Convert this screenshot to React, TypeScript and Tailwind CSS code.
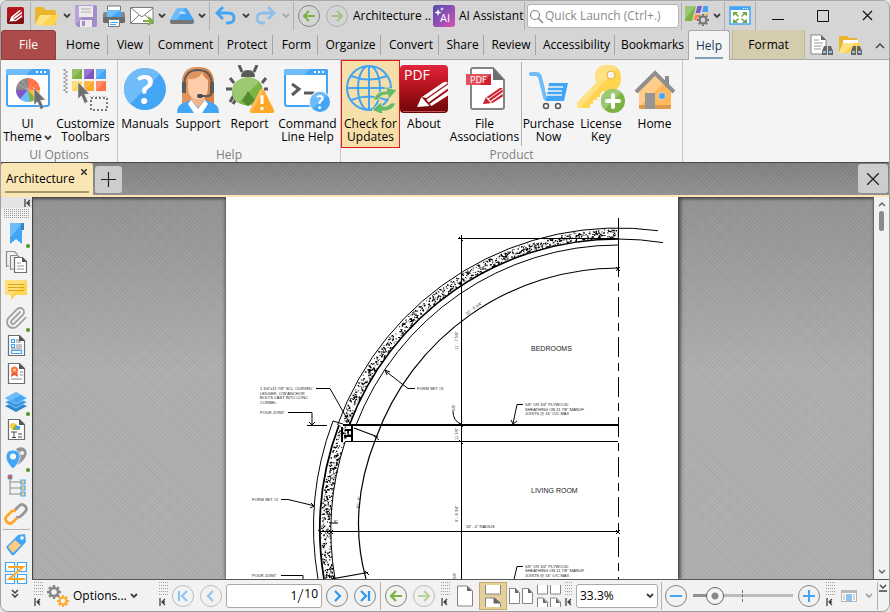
import type { ReactNode } from "react"
import clsx from "clsx"
import { Paperclip } from "lucide-react"

/* ---------- shared bits ---------- */

interface SvgProps {
  w: number
  h: number
  children: ReactNode
}

function Svg({ w, h, children }: SvgProps) {
  return (
    <svg width={w} height={h} viewBox={`0 0 ${w} ${h}`} fill="none" className="block flex-none" aria-hidden="true">
      {children}
    </svg>
  )
}

function Chevron({ faded = false }: { faded?: boolean }) {
  return (
    <Svg w={8} h={6}>
      <path d="M1 1l3 3 3-3" stroke={faded ? "#a8a8a8" : "#404040"} strokeWidth="1.800" />
    </Svg>
  )
}

function Divider({ className }: { className?: string }) {
  return <span className={clsx("w-px flex-none bg-[#b0b0b0]", className)} />
}

function PinIcon() {
  return (
    <Svg w={7} h={8}>
      <path d="M1 0v8M6 1L3 4l3 3M3 4h3" stroke="#404040" strokeWidth="1.300" />
    </Svg>
  )
}

function Grip({ dots = 9 }: { dots?: number }) {
  return (
    <span className="flex w-[10px] flex-none flex-col items-start gap-px pb-1">
      <Svg w={dots} h={15}>
        {[0, 3, 6, 9, 12].map((y) => (
          <path key={y} d={`M0 ${y + 0.5}h${dots}`} stroke="#a0a0a0" strokeDasharray="1 1" />
        ))}
      </Svg>
      <PinIcon />
    </span>
  )
}

interface RoundButtonProps {
  label: string
  children: ReactNode
  faded?: boolean
}

function RoundButton({ label, children, faded }: RoundButtonProps) {
  return (
    <button
      aria-label={label}
      className={clsx(
        "flex size-[22px] flex-none items-center justify-center rounded-full border border-[#858585]",
        faded && "opacity-50",
      )}
    >
      {children}
    </button>
  )
}

function Arrow({ back = false }: { back?: boolean }) {
  return (
    <Svg w={14} h={12}>
      <path d={back ? "M13 6H2M7 1L2 6l5 5" : "M1 6h11M7 1l5 5-5 5"} stroke="#7cb342" strokeWidth="2.200" />
    </Svg>
  )
}

function Cursor({ x, y }: { x: number; y: number }) {
  return (
    <path
      transform={`translate(${x} ${y})`}
      d="M0 0l11.500 12-5 .3 3.500 7.500-3.400 1.700-3.200-7.800L0 17z"
      fill="#6e6e6e"
      stroke="#f4f4f4"
      strokeWidth=".5"
    />
  )
}

function PencilMark() {
  return (
    <>
      <path d="M17 42l4.500-10 8 9z" />
      <path d="M22 32L43 17.500q3-1.500 5 .5L26.500 33z" />
      <path d="M26.500 34.500L48 19.500v4L28.500 37.500z" />
      <path d="M29.500 39L48 26v4.500L31.500 41z" />
    </>
  )
}

function Gear({ x, y, r, color }: { x: number; y: number; r: number; color: string }) {
  return (
    <g transform={`translate(${x} ${y})`} stroke={color}>
      <circle r={r * 0.58} strokeWidth={r * 0.36} />
      {[0, 45, 90, 135, 180, 225, 270, 315].map((a) => (
        <path key={a} d={`M0 ${-r * 0.7}V${-r}`} strokeWidth={r * 0.35} transform={`rotate(${a})`} />
      ))}
    </g>
  )
}

/* ---------- quick access icons ---------- */

const LogoIcon = () => (
  <Svg w={17} h={17}>
    <rect width="17" height="17" rx="2" fill="#b01620" />
    <path d="M0 11h17v4a2 2 0 01-2 2H2a2 2 0 01-2-2z" fill="#7e1014" />
    <path d="M2.500 14.500L4.500 9.500 12.500 3l1.500.5-8 7z" fill="#fff" />
    <path d="M6 11l9-6.500V6.500L7 12.500zM7.500 13.500l7.500-5.500v2L8.500 14.500z" fill="#fff" />
    <path d="M2.500 14.500l2-5 4 4.500z" fill="#fff" />
  </Svg>
)

const FolderIcon = () => (
  <Svg w={24} h={22}>
    <path d="M0 20V4q0-2 2-2h6l3 3h8q2 0 2 2v13z" fill="#eab42c" />
    <path d="M0 20l5-10h19l-4 9q-.4 1.500-2 1.500z" fill="#ffd54f" />
    <path d="M0 20l5-10h12L6 20.500z" fill="#ffe082" />
  </Svg>
)

const SaveIcon = () => (
  <Svg w={22} h={22}>
    <path d="M2 0h18a2 2 0 012 2v18a2 2 0 01-2 2H3l-3-3V2a2 2 0 012-2z" fill="#a48cc8" />
    <path d="M2 0h18L0 20V2a2 2 0 012-2z" fill="#b8a4d8" />
    <path d="M4 1h14v11H4zM5 15h12v7H5z" fill="#ebebeb" />
    <path d="M6 4h10M6 7h10" stroke="#c4c4c4" strokeWidth="1.500" />
    <path d="M7 16h3v5H7z" fill="#a48cc8" />
  </Svg>
)

const PrinterIcon = () => (
  <Svg w={22} h={22}>
    <path d="M4.500 1h13v6h-13z" fill="#fff" stroke="#777" />
    <rect y="7" width="22" height="11" rx="2" fill="#858585" />
    <path d="M0 12h22v4a2 2 0 01-2 2H2a2 2 0 01-2-2z" fill="#6c6c6c" />
    <path d="M4 5h14v7H4z" fill="#42a5f5" />
    <path d="M4 5h14L8 12H4z" fill="#70bcf8" />
    <path d="M5.500 14.500h11v7h-11z" fill="#fff" stroke="#777" />
    <path d="M7 17.500h8M7 19.500h6" stroke="#42a5f5" />
  </Svg>
)

const MailIcon = () => (
  <Svg w={24} h={20}>
    <path d="M.5 1.500h22.500v16H.500z" fill="#fff" stroke="#7c7c7c" />
    <path d="M1 2l11 9L23 2M1 17l8-8M23 17l-8-8" stroke="#7c7c7c" />
    <path d="M13 15h9M18 11l4.500 4-4.500 4" stroke="#7cb342" strokeWidth="2.200" />
  </Svg>
)

const ScannerIcon = () => (
  <Svg w={24} h={16}>
    <path d="M0 12L6 2q1-2 3-2h6q2 0 3 2l6 10z" fill="#42a5f5" />
    <path d="M0 12L6 2q1-2 3-2h6l-8 12z" fill="#70bcf8" />
    <path d="M9 6l1.500-2.500h4L16 6z" fill="#b9ddfb" />
    <path d="M0 12h24v2q0 2-2 2H2q-2 0-2-2z" fill="#777" />
  </Svg>
)

const UndoIcon = () => (
  <Svg w={21} h={19}>
    <path d="M8 1L2 7l6 6M3 7h10q6 0 6 5t-6 5h-2" stroke="#42a5f5" strokeWidth="2.800" />
  </Svg>
)

const RedoIcon = () => (
  <Svg w={21} h={19}>
    <path d="M13 1l6 6-6 6M18 7H8q-6 0-6 5t6 5h2" stroke="#8fbfe8" strokeWidth="2.800" />
  </Svg>
)

const AiIcon = () => (
  <Svg w={22} h={22}>
    <defs>
      <linearGradient id="ai" x2="1" y2="1">
        <stop stopColor="#4a4fb0" />
        <stop offset="1" stopColor="#d850b4" />
      </linearGradient>
    </defs>
    <rect width="22" height="22" rx="3" fill="url(#ai)" />
    <path d="M5 4l1 2.500L8.500 7.500 6 8.500 5 11 4 8.500 1.500 7.500 4 6.500zM9 2l.6 1.400L11 4l-1.400.6L9 6l-.6-1.400L7 4l1.400-.6z" fill="#fff" />
    <text x="7" y="17" fontSize="11" fill="#fff" fontFamily="Open Sans">AI</text>
  </Svg>
)

const LayoutIcon = () => (
  <Svg w={25} h={22}>
    <path d="M0 1h11L7 16H0z" fill="#7cb342" />
    <path d="M0 1h11L0 14z" fill="#9bc870" />
    <path d="M12.500 1H17l-2 7h-4.500z" fill="#7e57c2" />
    <path d="M18.500 1H23v6h-6z" fill="#42a5f5" />
    <path d="M10 9.500h7l-2 5.500H8.500z" fill="#ff8a50" />
    <path d="M18 8.500h5V15h-6z" fill="#ffb648" />
    <circle cx="18" cy="15" r="6" fill="#d5d5d5" />
    <Gear x={18} y={15} r={6} color="#757575" />
  </Svg>
)

const FullScreenIcon = () => (
  <Svg w={22} h={19}>
    <path d="M1 1h20v17H1z" fill="#fff" stroke="#42a5f5" strokeWidth="1.500" />
    <path d="M1 1h20v3H1z" fill="#42a5f5" />
    <path d="M14 2.500h6" stroke="#fff" strokeDasharray="1 1" />
    <path d="M4 6h5L7.500 7.500 10 10l-1 1-2.500-2.500L4 10zM18 6h-5l1.500 1.500L12 10l1 1 2.500-2.500L18 10zM4 17h5l-1.500-1.500L10 13l-1-1-2.500 2.500L4 13zM18 17h-5l1.500-1.500L12 13l1-1 2.500 2.500L18 13z" fill="#6fa83c" />
  </Svg>
)

const Binoculars = () => (
  <>
    <path d="M12 21v-4l2-5h3v9zM23 21v-4l-2-5h-3v9z" fill="#666" />
    <path d="M13 18h3M19 18h3" stroke="#8cc4f2" strokeWidth="2" />
  </>
)

const FindDocIcon = () => (
  <Svg w={24} h={23}>
    <path d="M1 1h10l5 5v14H1z" fill="#fff" stroke="#858585" />
    <path d="M11 1v5h5z" fill="#666" />
    <path d="M4 6h5M4 9h9M4 12h8M4 15h7" stroke="#999" />
    <Binoculars />
  </Svg>
)

const FindFolderIcon = () => (
  <Svg w={24} h={23}>
    <path d="M0 19V3q0-1 1-1h7l2 2h8v5H4z" fill="#eab42c" />
    <path d="M4 6h15v5H4z" fill="#fff" />
    <path d="M0 19L4 9h18l-4 10z" fill="#ffd54f" />
    <path d="M0 19L4 9h12L5 19z" fill="#ffe082" />
    <Binoculars />
  </Svg>
)

/* ---------- ribbon icons ---------- */

const ThemeIcon = () => (
  <Svg w={46} h={46}>
    <rect x="2" y="4" width="42" height="36" rx="2" fill="#fff" stroke="#42a5f5" strokeWidth="2" />
    <path d="M1 5q0-2 2-2h40q2 0 2 2v4H1z" fill="#70bcf8" />
    <path d="M21 9l6-6h16q2 0 2 2v4z" fill="#42a5f5" />
    <path d="M31 6h11" stroke="#fff" strokeWidth="2" strokeDasharray="2 2" />
    <g transform="translate(23 24)">
      <path d="M0 0V-12A12 12 0 0112 0z" fill="#ff7043" />
      <path d="M0 0H12A12 12 0 010 12z" fill="#ffb648" />
      <path d="M0 0L8 9A12 12 0 01-3 11.600z" fill="#7cb342" />
      <path d="M0 0L2 11.800A12 12 0 01-9 8z" fill="#70bcf8" />
      <path d="M0 0L-8 9A12 12 0 01-12 0z" fill="#7e57c2" />
      <path d="M0 0H-12A12 12 0 010-12z" fill="#8a8a8a" />
      <path d="M-10-6L0 0-6-10M0 0l6-10M0 0l10-5" stroke="#fff" strokeOpacity=".25" />
    </g>
    <Cursor x={29} y={22} />
  </Svg>
)

const ToolbarsIcon = () => (
  <Svg w={46} h={48}>
    <path d="M1.500 4v22M3.500 6v22" stroke="#999" strokeWidth="2" strokeDasharray="2 2" />
    {[
      ["#7cb342", 9, 4],
      ["#7e57c2", 21, 4],
      ["#42a5f5", 33, 4],
      ["#ffd54f", 9, 16],
      ["#ffa726", 21, 16],
      ["#ff7043", 33, 16],
    ].map(([fill, x, y]) => (
      <g key={String(fill)}>
        <rect x={x} y={y} width="10" height="10" fill={String(fill)} />
        <path d={`M${x} ${y}h10l-10 10z`} fill="#fff" fillOpacity=".2" />
      </g>
    ))}
    <Cursor x={15} y={17} />
    <path d="M28 33h16v12H28z" stroke="#777" strokeWidth="2" strokeDasharray="2 2" />
    <path d="M27 31.500h18" stroke="#aaa" strokeDasharray="1 2" />
  </Svg>
)

const HelpDisc = ({ x, y, r, size }: { x: number; y: number; r: number; size: number }) => (
  <g transform={`translate(${x} ${y})`}>
    <circle r={r} fill="#42a5f5" />
    <path d={`M${-r * 0.71} ${r * 0.71}A${r} ${r} 0 01${r * 0.71} ${-r * 0.71}z`} fill="#70bcf8" />
    <text y={size * 0.37} textAnchor="middle" fontSize={size} fontWeight="700" fill="#fff" fontFamily="Lato">?</text>
  </g>
)

const ManualsIcon = () => (
  <Svg w={46} h={46}>
    <HelpDisc x={23} y={23} r={21} size={40} />
  </Svg>
)

const SupportIcon = () => (
  <Svg w={42} h={48}>
    <path d="M5 44V18Q5 2 21 2t16 16v26H5z" fill="#d9824a" />
    <path d="M5 44V18Q5 2 21 2l8 3L9 42z" fill="#e0955f" />
    <path d="M14 30h14v10l-7 5-7-5z" fill="#b86430" />
    <path d="M15 29h12l2 10-8 7-8-7z" fill="#f0b78c" />
    <path d="M11 14q10 1 14-6 3 6 6 7v7q0 12-10 12T11 22z" fill="#ffccaa" />
    <path d="M0 48q0-9 9-11l5-2 7 8 7-8 5 2q9 2 9 11z" fill="#42a5f5" />
    <path d="M14 35l-3 4 6 9h8l6-9-3-4-7 9z" fill="#fff" />
    <path d="M7 19Q8 5 21 5t14 14" stroke="#5a5a5a" strokeWidth="2" />
    <path d="M5 17h4v11H5zM33 17h4v11h-4z" fill="#5a5a5a" />
    <path d="M35 27q-1 5-7 4h-5" stroke="#5a5a5a" strokeWidth="2" />
    <rect x="20" y="29" width="6" height="4" rx="2" fill="#4a4a4a" />
  </Svg>
)

const ReportIcon = () => (
  <Svg w={48} h={48}>
    <path d="M15 12q0-7 7-7t7 7z" fill="#5a5a5a" />
    <path d="M16 7l-3-7M28 7l3-7M8 18l-4-5M36 18l4-5M6 24H0M38 24h4M8 30l-4 7M10 34l-3 5" stroke="#5a5a5a" strokeWidth="3" />
    <path d="M22 12q15 2 15 15 0 11-15 14Q6 38 6 26q1-12 16-14z" fill="#7cb342" />
    <path d="M22 12q6 0 11 5L12 38Q6 34 6 26q1-12 16-14z" fill="#9bc870" />
    <path d="M22 26l7 9-7 6-6-5z" fill="#558b2f" />
    <path d="M34 25q2-3 4 0l10 20q1 3-2 3H26q-3 0-2-3z" fill="#ffa726" />
    <path d="M34 25q2-3 4 0L25 48q-2-1-1-3z" fill="#ffbc5c" />
    <path d="M36 30v9M36 42v3" stroke="#fff" strokeWidth="3" />
  </Svg>
)

const CommandIcon = () => (
  <Svg w={52} h={48}>
    <rect x="3" y="5" width="42" height="36" rx="2" fill="#fff" stroke="#42a5f5" strokeWidth="2" />
    <path d="M2 6q0-2 2-2h40q2 0 2 2v4H2z" fill="#70bcf8" />
    <path d="M22 10l6-6h16q2 0 2 2v4z" fill="#42a5f5" />
    <path d="M32 7h11" stroke="#fff" strokeWidth="2" strokeDasharray="2 2" />
    <path d="M10 19l7 5-7 6" stroke="#5a5a5a" strokeWidth="3" />
    <path d="M22 28h10" stroke="#5a5a5a" strokeWidth="3" />
    <circle cx="38" cy="37" r="11" fill="#f4f4f4" />
    <HelpDisc x={38} y={37} r={10} size={18} />
  </Svg>
)

const GlobeIcon = () => (
  <Svg w={50} h={48}>
    <g stroke="#42a5f5" strokeWidth="2">
      <circle cx="23" cy="23" r="22" />
      <ellipse cx="23" cy="23" rx="11" ry="22" />
      <path d="M23 1v44M1 23h44M5 11q18 7 36 0M5 35q18-7 36 0" />
    </g>
    <path d="M27 35q4-10 14-9l-2-4 12 3-8 9-1-4q-7-1-10 5z" fill="#66bb6a" stroke="#f7dfa9" strokeWidth=".8" />
    <path d="M50 38q-4 9-14 8l2 4-12-5 9-8 1 4q6 1 9-3z" fill="#66bb6a" stroke="#f7dfa9" strokeWidth=".8" />
  </Svg>
)

const AboutIcon = () => (
  <Svg w={48} h={48}>
    <defs>
      <linearGradient id="about" x2="0" y2="1">
        <stop stopColor="#e3253b" />
        <stop offset=".45" stopColor="#b5131d" />
        <stop offset="1" stopColor="#6b0608" />
      </linearGradient>
    </defs>
    <rect width="48" height="48" rx="4" fill="url(#about)" />
    <path d="M3 46.500h42" stroke="#c9505a" />
    <text x="4" y="15" fontSize="14" fill="#fff" fontFamily="Open Sans">PDF</text>
    <g fill="#fff">
      <PencilMark />
    </g>
  </Svg>
)

const FileAssocIcon = () => (
  <Svg w={40} h={46}>
    <path d="M6 4q0-2 2-2h20l11 12v27q0 2-2 2H8q-2 0-2-2z" fill="#fff" stroke="#858585" strokeWidth="2" />
    <path d="M28 2v12h11z" fill="#6e6e6e" />
    <path d="M1 8h25v11H1z" fill="#d3202e" />
    <path d="M1 8h25L15 19H1z" fill="#e0525c" />
    <text x="5" y="17" fontSize="9" fill="#fff" fontFamily="Open Sans">PDF</text>
    <g fill="#cf1f2c" transform="translate(7 11) scale(.64)">
      <PencilMark />
    </g>
  </Svg>
)

const CartIcon = () => (
  <Svg w={42} h={46}>
    <path d="M3 8h5q3 0 4 3l5 20q0 2 3 2h14" stroke="#70bcf8" strokeWidth="4" strokeLinecap="round" />
    <path d="M21 17h19l-4 18H18z" fill="#42a5f5" />
    <path d="M17 21h18M17 25h17M18 29h16" stroke="#f4f4f4" strokeWidth="1.500" />
    <circle cx="18" cy="40" r="2.500" stroke="#5a5a5a" strokeWidth="1.500" />
    <circle cx="30" cy="40" r="2.500" stroke="#5a5a5a" strokeWidth="1.500" />
  </Svg>
)

const KeyIcon = () => (
  <Svg w={48} h={48}>
    <path d="M18 13Q18 0 31 0t13 13-13 14q-3 0-5-1l-3 3v3h-3v3h-4v4h-3v4H0v-5l20-21q-2-2-2-4z" fill="#ffd54f" />
    <path d="M18 13Q18 0 31 0q6 0 9 3L3 43H0v-5l20-21q-2-2-2-4z" fill="#ffe082" />
    <circle cx="34" cy="10" r="4" fill="#f4f4f4" stroke="#e5b53a" />
    <circle cx="36" cy="36" r="12" fill="#7cb342" />
    <path d="M27.500 44.500a12 12 0 0117-17z" fill="#9bc870" />
    <path d="M36 30v12M30 36h12" stroke="#fff" strokeWidth="4" strokeLinecap="round" />
  </Svg>
)

const HouseIcon = () => (
  <Svg w={42} h={46}>
    <path d="M31 10h4v12h-4z" fill="#8a8a8a" />
    <path d="M5 26L21 10l16 16v17H5z" fill="#ffb85a" />
    <path d="M5 26L21 10l8 8L5 41z" fill="#ffcc8a" />
    <path d="M5 39h32v2q0 2-2 2H7q-2 0-2-2z" fill="#e09a50" />
    <path d="M11 27h10v16H11z" fill="#969696" />
    <path d="M25 27h6v6h-6z" fill="#42a5f5" stroke="#c9e4fb" strokeWidth=".6" />
    <path d="M2 26L21 7l19 19" stroke="#8f8f8f" strokeWidth="4" />
  </Svg>
)

/* ---------- side pane icons, all on a 24px grid ---------- */

const Sheet = () => (
  <>
    <path d="M4.500 1.500h11l5 5v15h-16z" fill="#fff" stroke="#6e6e6e" strokeWidth="1.200" />
    <path d="M15 1v6h6z" fill="#555" />
  </>
)

const SIDE_TOOLS: { label: string; marked?: boolean; art: ReactNode }[] = [
  {
    label: "Bookmarks",
    marked: true,
    art: (
      <>
        <path d="M6 1h12v21l-6-5-6 5z" fill="#42a5f5" />
        <path d="M6 1h12L6 16z" fill="#70bcf8" />
        <path d="M17 1h3v7h-3z" fill="#2f86cc" />
      </>
    ),
  },
  {
    label: "Thumbnails",
    art: (
      <>
        <path d="M3 16.500h-.5v-15h8l3 3M7 19.500h-.5v-14h7l3 3" stroke="#8a8a8a" strokeWidth="1.200" />
        <path d="M3 16h2M7 19h3" stroke="#8a8a8a" />
        <path d="M10.500 7.500h8l4 4v11h-12z" fill="#fff" stroke="#6e6e6e" strokeWidth="1.200" />
        <path d="M18 7v5h5z" fill="#555" />
        <path d="M13 13h4M13 16h7M13 19h7" stroke="#999" />
      </>
    ),
  },
  {
    label: "Comments",
    art: (
      <>
        <path d="M1 2h22v15H12l-5 5v-5H1z" fill="#ffd54f" />
        <path d="M1 2h22L8 17H1z" fill="#ffdf78" />
        <path d="M4 6.500h16M4 9.500h16M4 12.500h16" stroke="#d9a520" />
      </>
    ),
  },
  {
    label: "Attachments",
    marked: true,
    art: <Paperclip size={24} color="#a0a0a0" strokeWidth={1.8} />,
  },
  {
    label: "Fields",
    art: (
      <>
        <Sheet />
        <path d="M7.500 5.500h3v3h-3zM7.500 10.500h3v3h-3zM7.500 16.500h10v3h-10z" stroke="#42a5f5" strokeWidth="1.200" />
        <path d="M12 6h3M12 8h5M12 11h6M12 13h6M7 15h11" stroke="#888" />
      </>
    ),
  },
  {
    label: "Signatures",
    art: (
      <>
        <Sheet />
        <path d="M8 9h5l1 6-3.500-2L7 15z" fill="#e5573a" />
        <circle cx="10.500" cy="8" r="3.500" fill="#ff7043" />
        <circle cx="10.500" cy="8" r="1.600" fill="#ffcc80" />
        <path d="M16 10h3M16 13h3M7 17h11" stroke="#888" />
      </>
    ),
  },
  {
    label: "Layers",
    marked: true,
    art: (
      <>
        <path d="M1 16l11-5 11 5-11 6z" fill="#2f86cc" />
        <path d="M1 12l11-5 11 5-11 6z" fill="#3b96e0" stroke="#d5eafc" strokeWidth=".5" />
        <path d="M1 8l11-6 11 6-11 6z" fill="#42a5f5" stroke="#d5eafc" strokeWidth=".5" />
        <path d="M1 8l11-6 5 3L6 11z" fill="#70bcf8" />
      </>
    ),
  },
  {
    label: "Content",
    art: (
      <>
        <Sheet />
        <circle cx="9" cy="8" r="3" fill="#ffca3a" />
        <path d="M8 12l4-6 4 6z" fill="#7cb342" />
        <path d="M12 8h4v3h-4z" fill="#42a5f5" />
        <path d="M7 14h6M10 14v6M8 19.500h4M14 16h4M14 19h4" stroke="#444" />
      </>
    ),
  },
  {
    label: "Destinations",
    marked: true,
    art: (
      <>
        <path d="M12 3q4-3 8-1 4 3 2 8-2 5-9 9l2-7z" fill="#969696" />
        <path d="M9 4q7 0 7 7 0 5-7 12-7-7-7-12 0-7 7-7z" fill="#42a5f5" stroke="#f4f4f4" strokeWidth=".8" />
        <circle cx="9" cy="10.500" r="3" fill="#fff" />
        <circle cx="18" cy="7" r="2" fill="#f2f2f2" />
      </>
    ),
  },
  {
    label: "Model tree",
    art: (
      <>
        <path d="M6 5v16M6 8h12M6 14h12M6 20h12" stroke="#8a8a8a" />
        <path d="M4 1h4v4H4z" fill="#f4511e" stroke="#42a5f5" strokeWidth=".8" />
        <path d="M17 6h4v4h-4zM17 12h4v4h-4zM17 18h4v4h-4z" fill="#ffd54f" stroke="#42a5f5" strokeWidth="1.200" />
      </>
    ),
  },
  {
    label: "Links",
    art: (
      <g strokeWidth="2.800">
        <path d="M11 8l4-4q3-3 6 0t0 6l-4 4q-2 2-5 1" stroke="#969696" />
        <path d="M13 16l-4 4q-3 3-6 0t0-6l4-4q2-2 5-1" stroke="#ffa726" />
      </g>
    ),
  },
  {
    label: "Named tags",
    art: (
      <>
        <path d="M2 14L14 2l7-1 1 8L10 22q-2 1-3-1z" fill="#42a5f5" />
        <path d="M4 14l7-7 6 5-8 8z" fill="#ffcc80" />
        <circle cx="18" cy="5" r="1.800" fill="#fff" />
      </>
    ),
  },
  {
    label: "Articles",
    art: (
      <>
        <path d="M1.500 1.500h9v9h-9zM13.500 1.500h9v9h-9zM1.500 13.500h9v9h-9zM13.500 13.500h9v9h-9z" fill="#fff" stroke="#42a5f5" strokeWidth="1.200" />
        <path d="M4 6h15L5 18h16" stroke="#ffa726" strokeWidth="2" />
      </>
    ),
  },
]

/* ---------- title bar ---------- */

function TitleBar() {
  return (
    <header className="flex h-[30px] flex-none items-center border-t border-[#a8a8a8]">
      <span className="flex w-[29px] flex-none justify-center"><LogoIcon /></span>
      <Divider className="h-7" />
      <button aria-label="Open" className="ml-1 flex items-center gap-1"><FolderIcon /><Chevron /></button>
      <button aria-label="Save" className="ml-1"><SaveIcon /></button>
      <button aria-label="Print" className="ml-1.5"><PrinterIcon /></button>
      <button aria-label="Mail" className="ml-[5px] flex items-center gap-1"><MailIcon /><Chevron /></button>
      <button aria-label="Scan" className="ml-1 flex items-center gap-1"><ScannerIcon /><Chevron /></button>
      <Divider className="ml-[3px] h-7" />
      <button aria-label="Undo" className="ml-[5px] flex items-center gap-1.5"><UndoIcon /><Chevron /></button>
      <button aria-label="Redo" className="ml-[5px] flex items-center gap-1.5"><RedoIcon /><Chevron faded /></button>
      <Divider className="ml-[3px] h-7" />
      <span className="ml-1 flex gap-1.5">
        <RoundButton label="Back"><Arrow back /></RoundButton>
        <RoundButton label="Forward" faded><Arrow /></RoundButton>
      </span>
      <button className="ml-[5px] w-20 flex-none text-left whitespace-nowrap">Architecture ..</button>
      <button className="flex w-[91px] flex-none items-center gap-1 whitespace-nowrap"><AiIcon />AI Assistant</button>
      <Divider className="h-7" />
      <label className="mx-0.5 flex h-6 w-[152px] flex-none items-center rounded-[3px] border border-[#b4b4b4] bg-white">
        <Svg w={17} h={16}>
          <circle cx="7" cy="7" r="4.500" stroke="#858585" strokeWidth="1.200" />
          <path d="M10 10l5 5" stroke="#858585" strokeWidth="1.500" />
        </Svg>
        <input
          aria-label="Quick Launch"
          placeholder="Quick Launch (Ctrl+.)"
          className="min-w-0 flex-1 bg-transparent outline-none placeholder:text-[#8a8a8a]"
        />
      </label>
      <Divider className="h-7" />
      <button aria-label="Layout" className="ml-[3px] flex items-center gap-[3px]"><LayoutIcon /><Chevron /></button>
      <Divider className="ml-[3px] h-7" />
      <button aria-label="Full screen" className="ml-1"><FullScreenIcon /></button>
      <Divider className="ml-1 h-7" />
      <span className="flex flex-1 items-center justify-between pr-4 pl-4">
        <button aria-label="Minimize"><Svg w={12} h={12}><path d="M0 9.500h12" stroke="#111" /></Svg></button>
        <button aria-label="Maximize"><Svg w={12} h={12}><path d="M.5.500h11v11H.500z" stroke="#111" /></Svg></button>
        <button aria-label="Close"><Svg w={11} h={11}><path d="M1 1l9 9M10 1l-9 9" stroke="#111" strokeWidth="1.200" /></Svg></button>
      </span>
    </header>
  )
}

/* ---------- ribbon tabs ---------- */

const TABS = [
  { name: "Home", width: "w-[52px]" },
  { name: "View", width: "w-[42px]" },
  { name: "Comment", width: "w-[69px]" },
  { name: "Protect", width: "w-[54px]" },
  { name: "Form", width: "w-[45px]" },
  { name: "Organize", width: "w-[63px]" },
  { name: "Convert", width: "w-[58px]" },
  { name: "Share", width: "w-[45px]" },
  { name: "Review", width: "w-[52px]" },
  { name: "Accessibility", width: "w-[79px]" },
  { name: "Bookmarks", width: "w-[73px]" },
]

function RibbonTabs() {
  return (
    <nav className="flex h-[30px] flex-none items-stretch shadow-[inset_0_-1px_0_#a8a8a8]">
      <button className="w-[55px] flex-none rounded-t-[3px] border border-[#8f3c3c] bg-[#ad4a4a] text-white">File</button>
      {TABS.map((tab, i) => (
        <button key={tab.name} className={clsx("relative flex-none pl-0.5 whitespace-nowrap", tab.width)}>
          {tab.name}
          {i < TABS.length - 1 && <span className="absolute top-[5px] right-0 h-5 w-px bg-[#a4a4a4]" />}
        </button>
      ))}
      <button className="relative w-[42px] flex-none rounded-t-[3px] border border-b-0 border-[#a8a8a8] bg-[#f4f4f4] text-[#1b3a5c]">
        Help
        <span className="absolute inset-x-1.5 bottom-px h-0.5 bg-[#829fb3]" />
      </button>
      <button className="ml-0.5 w-[73px] flex-none border-x border-b border-[#c4b98e] border-b-[#a8a8a8] bg-[#d4ccad]">Format</button>
      <span className="flex flex-1 items-center justify-between pr-1 pl-[5px]">
        <button aria-label="Find"><FindDocIcon /></button>
        <button aria-label="Search"><FindFolderIcon /></button>
        <button aria-label="Collapse ribbon" className="ml-2">
          <Svg w={10} h={7}><path d="M1 6l4-4 4 4" stroke="#444" strokeWidth="1.500" /></Svg>
        </button>
      </span>
    </nav>
  )
}

/* ---------- ribbon ---------- */

interface RibbonButtonProps {
  icon: ReactNode
  lines: string[]
  width: string
  active?: boolean
  menu?: boolean
}

function RibbonButton({ icon, lines, width, active, menu }: RibbonButtonProps) {
  return (
    <button
      className={clsx(
        "flex h-[88px] flex-none flex-col items-center border pt-1",
        width,
        active ? "border-[#e81818] bg-[#f7dfa9]" : "border-transparent",
      )}
    >
      <span className="flex h-12 flex-none items-center">{icon}</span>
      <span className="mt-1 block leading-[13px] whitespace-nowrap">
        {lines[0]}
        {lines[1] && <br />}
        {lines[1]}
        {menu && <span className="ml-0.5 inline-block align-middle"><Chevron /></span>}
      </span>
    </button>
  )
}

function RibbonGroup({ title, children }: { title: string; children: ReactNode }) {
  return (
    <section className="flex flex-none flex-col border-r border-[#c4c4c4]">
      <div className="flex">{children}</div>
      <h2 className="text-center leading-[13px] text-[#808080]">{title}</h2>
    </section>
  )
}

function Ribbon() {
  return (
    <div className="flex h-[102px] flex-none bg-[#f4f4f4]">
      <RibbonGroup title="UI Options">
        <RibbonButton icon={<ThemeIcon />} lines={["UI", "Theme"]} width="w-[53px]" menu />
        <RibbonButton icon={<ToolbarsIcon />} lines={["Customize", "Toolbars"]} width="w-[63px]" />
      </RibbonGroup>
      <RibbonGroup title="Help">
        <RibbonButton icon={<ManualsIcon />} lines={["Manuals"]} width="w-[54px]" />
        <RibbonButton icon={<SupportIcon />} lines={["Support"]} width="w-[52px]" />
        <RibbonButton icon={<ReportIcon />} lines={["Report"]} width="w-[51px]" />
        <RibbonButton icon={<CommandIcon />} lines={["Command", "Line Help"]} width="w-[65px]" />
      </RibbonGroup>
      <RibbonGroup title="Product">
        <RibbonButton icon={<GlobeIcon />} lines={["Check for", "Updates"]} width="w-[59px]" active />
        <RibbonButton icon={<AboutIcon />} lines={["About"]} width="w-[48px]" />
        <RibbonButton icon={<FileAssocIcon />} lines={["File", "Associations"]} width="w-[73px]" />
        <Divider className="my-0.5" />
        <RibbonButton icon={<CartIcon />} lines={["Purchase", "Now"]} width="w-[53px]" />
        <RibbonButton icon={<KeyIcon />} lines={["License", "Key"]} width="w-[52px]" />
        <RibbonButton icon={<HouseIcon />} lines={["Home"]} width="w-[55px]" />
      </RibbonGroup>
    </div>
  )
}

/* ---------- document tabs ---------- */

function DocumentTabs() {
  return (
    <div className="flex h-[35px] flex-none items-start border-t border-b-2 border-t-[#4a4a4a] border-b-[#fae5b5] bg-[#888888] bg-[repeating-linear-gradient(45deg,#00000009_0_1px,transparent_1px_3px),repeating-linear-gradient(-45deg,#ffffff0c_0_1px,transparent_1px_3px),linear-gradient(#808080,#929292)]">
      <div className="relative flex h-full w-[92px] flex-none items-center rounded-t-[3px] bg-[#fae5b5] pl-[5px]">
        <button className="whitespace-nowrap">Architecture</button>
        <button aria-label="Close tab" className="absolute top-1.5 right-1.5">
          <Svg w={6} h={6}><path d="M0 0l6 6M6 0L0 6" stroke="#333" strokeWidth="1.500" /></Svg>
        </button>
        <span className="absolute inset-x-1 bottom-0.5 h-0.5 bg-[#a8976e]" />
      </div>
      <button aria-label="New tab" className="mt-[3px] ml-0.5 flex h-[27px] w-[27px] items-center justify-center rounded-[3px] bg-[#cdcdcd]">
        <Svg w={15} h={15}><path d="M7.500 0v15M0 7.500h15" stroke="#222" strokeWidth="1.200" /></Svg>
      </button>
      <button aria-label="Close document" className="mt-px mr-px ml-auto flex h-[29px] w-[30px] items-center justify-center rounded-[3px] bg-[#cdcdcd]">
        <Svg w={12} h={12}><path d="M0 0l12 12M12 0L0 12" stroke="#222" strokeWidth="1.300" /></Svg>
      </button>
    </div>
  )
}

/* ---------- side pane ---------- */

function SidePane() {
  return (
    <aside className="flex w-[31px] flex-none flex-col bg-[#f2f2f2]">
      <button aria-label="Collapse pane" className="flex h-[11px] items-center justify-end bg-[#e4e4e4] pr-px"><PinIcon /></button>
      <span className="flex h-3 items-center justify-center">
        <Svg w={26} h={10}>
          {[0, 2, 4, 6, 8].map((y) => (
            <path key={y} d={`M0 ${y + 0.5}h26`} stroke="#9a9a9a" strokeDasharray="1 1" />
          ))}
        </Svg>
      </span>
      {SIDE_TOOLS.map((tool, i) => (
        <span key={tool.label} className="contents">
          {i === 11 && <span className="mx-0.5 my-px h-px bg-[#b4b4b4]" />}
          <button aria-label={tool.label} className="relative flex h-7 flex-none items-center justify-start pl-[3px]">
            <Svg w={24} h={24}>{tool.art}</Svg>
            {tool.marked && <span className="absolute right-0.5 bottom-0 size-1 rounded-full bg-[#4f9a1e]" />}
          </button>
        </span>
      ))}
      <button aria-label="More panes" className="flex flex-none justify-center pt-0.5 pr-1">
        <Svg w={8} h={9}><path d="M1 1l3 3 3-3M1 5l3 3 3-3" stroke="#404040" strokeWidth="1.500" /></Svg>
      </button>
    </aside>
  )
}

/* ---------- drawing sheet ---------- */

// Speckle fill for the concrete walls, spread between two radii
function speckle(cx: number, cy: number, from: number, to: number, count: number, seed: number) {
  let s = seed
  const next = () => {
    s = (s * 16807) % 2147483647
    return s / 2147483647
  }
  let d = ""
  for (let i = 0; i < count; i++) {
    const a = ((from + (to - from) * next()) * Math.PI) / 180
    const r = 288 + next() * 9
    const size = 0.5 + next() * 1.1
    d += `M${(cx - r * Math.cos(a)).toFixed(1)} ${(cy - r * Math.sin(a)).toFixed(1)}h${size.toFixed(1)}v${size.toFixed(1)}h${(-size).toFixed(1)}z`
  }
  return d
}

const UPPER_WALL = speckle(618, 526, 21, 90, 960, 71)
const LOWER_WALL = speckle(618, 531, -10, 21, 400, 13)

interface NoteProps {
  x: number
  ys: number[]
  lines: string[]
}

function Note({ x, ys, lines }: NoteProps) {
  return (
    <text fontSize="4">
      {lines.map((line, i) => (
        <tspan key={line} x={x} y={ys[i]}>{line}</tspan>
      ))}
    </text>
  )
}

const PLYWOOD = ['5/8" OR 3/4" PLYWOOD', 'SHEATHING ON 11 7/8" MANUF', 'JOISTS @ 16" O/C MAX']

function DrawingSheet() {
  return (
    <svg
      viewBox="226 197 452 382"
      preserveAspectRatio="xMidYMin slice"
      className="h-full w-[452px] max-w-full bg-white shadow-[1px_0_4px_1px_#333]"
      role="img"
      aria-label="Architecture section drawing"
    >
      <g stroke="#000" fill="none">
        <path d="M337.600 425A298 298 0 01658 230.700" />
        <path d="M349.400 425A287 287 0 01618 239" strokeWidth="1.600" />
        <path d="M618 239A287 287 0 01663 242.600" />
        <path d="M356 425A281 281 0 01618 245" />
        <path d="M376 438A258 258 0 01618 268" strokeWidth="1.200" />
        <path d="M376 438Q347 510 366 579" strokeWidth="1.200" />
        <path d="M339 425A298 298 0 00324 579" strokeWidth="1.800" />
        <path d="M345 442A287 287 0 00335 579" />
        <path d="M343 424l-10-3A303 303 0 00318 579" />
        <path d="M458 238.500h160M345 441.500h273M320 531.500h298M461.500 235v344" />
        <path d="M343 425h275" strokeWidth="2" />
        <path d="M618.500 218v42" />
        <path d="M618.500 257v322" strokeDasharray="20 6 8 6" />
        <path d="M342 427v15M352 424v17M345 430h8M344 436h8" strokeWidth="2" />
        <path d="M348 430h4v5h-4z" />
        <path d="M354 428l24 9M331 579l37-6.500" strokeWidth="1.200" />
        <path d="M316 388.500h14l22 39M288 412.500h24v12M307 425.500h20" />
        <path d="M281 499.500h7l25 6M281 575.500h22v4" />
        <path d="M415 388.500h-7l-22-17M523 404.500h-6l-4 19M453 411q0 10 8 13M523 566.500h-6l-3 13" />
        <path d="M309 422l3 3 3-3M311 503l3 3-4 2M387 375l-2-5 5 2M511 420l2 4 4-3M330 523h8" />
        <path d="M459 237l4 4M616 267l4 4M459 423l4 4M459 440l4 4M616 530l4 4M374 436l5 4M329 530l4 4M318 530l4 4M365 571l4 4M616 271l4-4M616 534l4-4M329 534l4-4" />
      </g>
      <path d={UPPER_WALL} fill="#000" />
      <path d={LOWER_WALL} fill="#000" />
      <g fill="#222" fontFamily="Liberation Sans">
        <text x="531" y="351" fontSize="7">BEDROOMS</text>
        <text x="531" y="493" fontSize="7">LIVING ROOM</text>
        <Note x={260} ys={[390, 395, 399, 404]} lines={["1 3/4\"x11 7/8\" SCL 'CURVED'", "LEDGER, C/W ANCHOR", "BOLTS CAST INTO CONC", "CORBEL"]} />
        <Note x={260} ys={[414]} lines={["POUR JOINT"]} />
        <Note x={252} ys={[501]} lines={["FORM SET #2"]} />
        <Note x={252} ys={[577]} lines={["POUR JOINT"]} />
        <Note x={417} ys={[390]} lines={["FORM SET #3"]} />
        <Note x={525} ys={[406, 411, 415]} lines={PLYWOOD} />
        <Note x={525} ys={[568, 572, 577]} lines={PLYWOOD} />
        <Note x={466} ys={[528]} lines={["18' - 0\"  RADIUS"]} />
        <Note x={334} ys={[523]} lines={['8"']} />
        <g fontSize="4">
          <text transform="translate(458 350) rotate(-90)">11' - 7 5/8"</text>
          <text transform="translate(455 411) rotate(-90)">5/8"</text>
          <text transform="translate(458 440) rotate(-90)">11 7/8"</text>
          <text transform="translate(458 522) rotate(-90)">9' - 8 3/4"</text>
          <text transform="translate(456 579) rotate(-90)">5/8"</text>
          <text transform="translate(359 509) rotate(-83)">10' - 0"</text>
          <text transform="translate(467 315) rotate(-36)">22' - 8 3/4"</text>
        </g>
      </g>
    </svg>
  )
}

function Workspace() {
  return (
    <main className="flex min-h-0 flex-1">
      <div className="flex min-w-0 flex-1 justify-center overflow-hidden border-l border-[#444] bg-[#ababab] bg-[repeating-linear-gradient(45deg,#00000009_0_1px,transparent_1px_3px),repeating-linear-gradient(-45deg,#ffffff0c_0_1px,transparent_1px_3px),linear-gradient(#929292,#aeaeae_45%,#aeaeae)] pr-0.5 shadow-[inset_0_3px_3px_-1px_#444]">
        <DrawingSheet />
      </div>
      <div className="flex w-4 flex-none flex-col items-center justify-between border-l border-[#666] bg-[#f2f2f2] py-1">
        <button aria-label="Scroll up"><Svg w={8} h={6}><path d="M1 5l3-3 3 3" stroke="#666" strokeWidth="1.500" /></Svg></button>
        <span className="mt-1 mb-auto h-5 w-[5px] rounded-full bg-[#8a8a8a]" />
        <button aria-label="Scroll down"><Svg w={8} h={6}><path d="M1 1l3 3 3-3" stroke="#666" strokeWidth="1.500" /></Svg></button>
      </div>
    </main>
  )
}

/* ---------- status bar ---------- */

const NavGlyph = ({ d }: { d: string }) => (
  <Svg w={14} h={12}><path d={d} stroke="#2f97f0" strokeWidth="2.200" /></Svg>
)

function StatusBar() {
  return (
    <footer className="flex h-8 flex-none items-center border-t border-[#555] bg-[#f2f2f2] pl-0.5">
      <Grip />
      <button className="ml-0.5 flex w-[91px] flex-none items-center gap-[3px] whitespace-nowrap">
        <Svg w={24} h={24}>
          <Gear x={8} y={8} r={7} color="#858585" />
          <Gear x={17} y={17} r={6} color="#ffa726" />
        </Svg>
        Options...
        <span className="ml-auto"><Chevron /></span>
      </button>
      <span className="ml-[22px] flex"><Grip /></span>
      <span className="ml-[3px] flex gap-1.5">
        <RoundButton label="First page" faded><NavGlyph d="M3 1v10M11 1L6 6l5 5" /></RoundButton>
        <RoundButton label="Previous page" faded><NavGlyph d="M9 1L4 6l5 5" /></RoundButton>
      </span>
      <label className="ml-1 flex h-6 w-[96px] flex-none items-center rounded-[3px] border border-[#a8a8a8] bg-white pr-[3px]">
        <input aria-label="Page" defaultValue="1" className="min-w-0 flex-1 bg-transparent text-right outline-none" />
        <Svg w={7} h={16}><path d="M6 1L1 15" stroke="#333" /></Svg>
        <span className="pb-1">10</span>
      </label>
      <span className="ml-1 flex gap-1.5">
        <RoundButton label="Next page"><NavGlyph d="M5 1l5 5-5 5" /></RoundButton>
        <RoundButton label="Last page"><NavGlyph d="M3 1l5 5-5 5M11 1v10" /></RoundButton>
      </span>
      <Divider className="mx-1 h-7" />
      <span className="flex gap-1.5">
        <RoundButton label="Previous view"><Arrow back /></RoundButton>
        <RoundButton label="Next view" faded><Arrow /></RoundButton>
      </span>
      <span className="ml-1.5 flex"><Grip /></span>
      <button aria-label="Single page" className="ml-1.5 flex-none">
        <Svg w={16} h={22}>
          <path d="M.5 1h10l5 5v15H.500z" fill="#fff" stroke="#858585" />
          <path d="M10 1v5h5z" fill="#666" />
        </Svg>
      </button>
      <button aria-label="Continuous" aria-pressed="true" className="ml-1.5 flex h-7 w-7 flex-none items-center justify-center border border-[#c4a96c] bg-[#e5cf9a]">
        <Svg w={16} h={22}>
          <path d="M.5 0v9h15V0" fill="#fff" stroke="#858585" />
          <path d="M.5 22v-9h9l6 5v4" fill="#fff" stroke="#858585" />
          <path d="M9 13v5h6z" fill="#666" stroke="#666" />
        </Svg>
      </button>
      <button aria-label="Two pages" className="ml-0.5 flex-none">
        <Svg w={24} h={16}>
          <path d="M.5.500h6l4 4v11H.500zM13.500.500h6l4 4v11h-10z" fill="#fff" stroke="#858585" />
          <path d="M6 0v5h4zM19 0v5h4z" fill="#666" />
        </Svg>
      </button>
      <button aria-label="Two pages continuous" className="ml-1 flex-none">
        <Svg w={24} h={22}>
          <path d="M.5 0v9h10V0M13.500 0v9h10V0" fill="#fff" stroke="#858585" />
          <path d="M.5 22v-9h6l4 4v5M13.500 22v-9h6l4 4v5" fill="#fff" stroke="#858585" />
          <path d="M6 13v5h4zM19 13v5h4z" fill="#666" />
        </Svg>
      </button>
      <span className="ml-1 flex"><Grip dots={7} /></span>
      <span className="relative ml-px flex-none">
        <select aria-label="Zoom" className="block h-6 w-[82px] appearance-none rounded-[3px] border border-[#a8a8a8] bg-white pl-[3px] outline-none">
          <option>33.3%</option>
        </select>
        <span className="pointer-events-none absolute top-[9px] right-1"><Chevron /></span>
      </span>
      <Divider className="mx-[3px] h-7" />
      <RoundButton label="Zoom out"><Svg w={14} h={14}><path d="M1 7h12" stroke="#42a5f5" strokeWidth="2" /></Svg></RoundButton>
      <span className="relative ml-1.5 flex w-[100px] flex-none items-center">
        <span className="absolute left-[49px] h-3 border-l border-dashed border-[#777]" />
        <input
          type="range"
          aria-label="Zoom level"
          defaultValue={16}
          className="h-[18px] w-full appearance-none bg-[linear-gradient(90deg,#909090_0_22%,#bcbcbc_22%)] bg-[size:100%_3px] bg-center bg-no-repeat outline-none [&::-webkit-slider-thumb]:size-[18px] [&::-webkit-slider-thumb]:appearance-none [&::-webkit-slider-thumb]:rounded-full [&::-webkit-slider-thumb]:border [&::-webkit-slider-thumb]:border-[#666] [&::-webkit-slider-thumb]:bg-[radial-gradient(circle,#888_0_3px,#f6f6f6_4px)]"
        />
      </span>
      <span className="ml-[5px] flex">
        <RoundButton label="Zoom in"><Svg w={14} h={14}><path d="M1 7h12M7 1v12" stroke="#42a5f5" strokeWidth="2" /></Svg></RoundButton>
      </span>
      <span className="ml-1.5 flex"><Grip /></span>
      <button aria-label="Panes" className="ml-[5px] flex items-center gap-2">
        <Svg w={16} h={12}>
          <path d="M.5.500h15v11H.500z" fill="#fff" stroke="#b4b4b4" />
          <path d="M0 0h16v3H0z" fill="#b9b9b9" />
          <path d="M5 4h6v7H5z" fill="#8fc2ee" />
          <path d="M2 5h2M2 7h2M2 9h2M12 5h2M12 7h2M12 9h2" stroke="#aaa" />
        </Svg>
        <Chevron faded />
      </button>
      <Divider className="ml-1 h-7" />
      <button aria-label="Scroll to end" className="ml-px self-start pt-1">
        <Svg w={8} h={8}><path d="M1 1l3 3 3-3M0 7h8" stroke="#404040" strokeWidth="1.300" /></Svg>
      </button>
    </footer>
  )
}

export default function App() {
  return (
    <div className="h-screen w-full bg-[#e6e6e6] font-['Open_Sans',sans-serif] text-[12px] leading-4 text-black">
      <div className="flex h-full flex-col overflow-hidden rounded-lg border-x border-b border-[#a0a0a0] bg-[#d5d5d5]">
        <TitleBar />
        <RibbonTabs />
        <Ribbon />
        <DocumentTabs />
        <div className="flex min-h-0 flex-1">
          <SidePane />
          <div className="flex min-w-0 flex-1 flex-col">
            <Workspace />
            <StatusBar />
          </div>
        </div>
      </div>
    </div>
  )
}
